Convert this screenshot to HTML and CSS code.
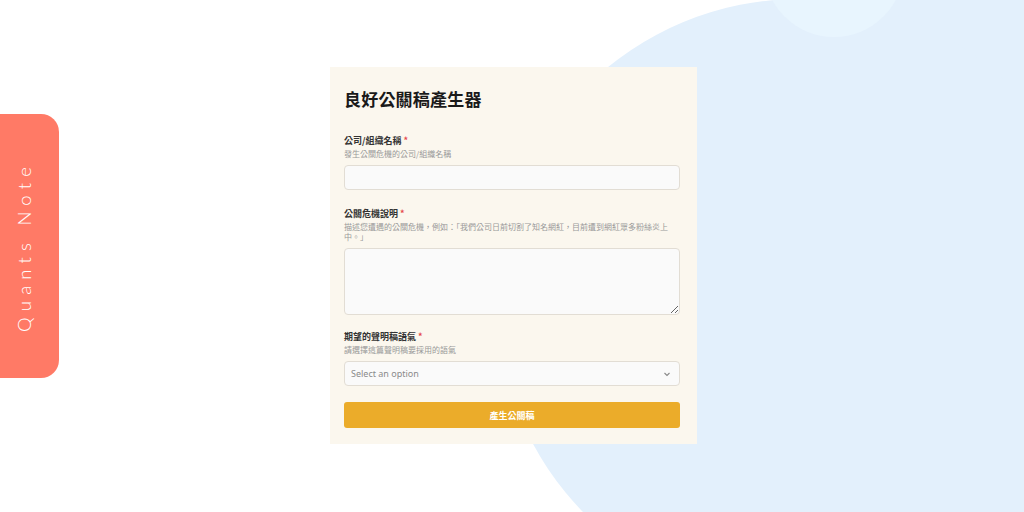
FILE: index.html
```html
<!DOCTYPE html>
<html lang="zh-Hant">
<head>
    <meta charset="UTF-8">
    <meta name="viewport" content="width=device-width, initial-scale=1.0">
    <title>良好公關稿產生器</title>
    <link rel="stylesheet" href="styles.css">
</head>
<body>
    <!-- soft blue backdrop on the right -->
    <svg class="backdrop" width="1024" height="512" viewBox="0 0 1024 512" aria-hidden="true">
        <rect x="799" y="0" width="225" height="512" fill="#e3f0fc"/>
        <circle cx="799" cy="301" r="302" fill="#e3f0fc"/>
        <circle cx="834" cy="-33" r="70" fill="#e8f5fe"/>
    </svg>

    <div class="side-tab">
        <span>Quants Note</span>
    </div>

    <div class="page">
        <form class="card" onsubmit="return false;">
            <h1>良好公關稿產生器</h1>

            <div class="field">
                <label for="company">公司/組織名稱 <span class="req">*</span></label>
                <p class="hint">發生公關危機的公司/組織名稱</p>
                <input type="text" id="company">
            </div>

            <div class="field field-tall">
                <label for="crisis">公關危機說明 <span class="req">*</span></label>
                <p class="hint">描述您遭遇的公關危機，例如：「我們公司日前切割了知名網紅，目前遭到網紅眾多粉絲炎上中。」</p>
                <textarea id="crisis"></textarea>
            </div>

            <div class="field field-last">
                <label for="tone">期望的聲明稿語氣 <span class="req">*</span></label>
                <p class="hint">請選擇這篇聲明稿要採用的語氣</p>
                <div class="select-wrap">
                    <select id="tone">
                        <option value="">Select an option</option>
                        <option value="sincere">誠懇</option>
                        <option value="firm">堅定</option>
                        <option value="humble">謙卑</option>
                    </select>
                    <svg class="chevron" width="8" height="8" viewBox="0 0 8 8">
                        <path d="M1.5 3 L4 5.5 L6.5 3" fill="none" stroke="#888" stroke-width="1.1"/>
                    </svg>
                </div>
            </div>

            <button type="submit">產生公關稿</button>
        </form>
    </div>
</body>
</html>
```

FILE: styles.css
```css
html, body {
    margin: 0;
    padding: 0;
}
body {
    font-family: "Noto Sans CJK TC", "Noto Sans", sans-serif;
    background-color: #ffffff;
    width: 1024px;
    height: 512px;
    overflow: hidden;
    position: relative;
}
.backdrop {
    position: absolute;
    left: 0;
    top: 0;
}
.side-tab {
    position: absolute;
    left: 0;
    top: 114px;
    width: 59px;
    height: 264px;
    background-color: #ff7a66;
    border-radius: 0 18px 18px 0;
    display: flex;
    align-items: center;
    justify-content: center;
    padding-right: 11px;
    box-sizing: border-box;
}
.side-tab span {
    writing-mode: vertical-rl;
    transform: rotate(180deg);
    color: #ffffff;
    font-family: Lato, "Open Sans", sans-serif;
    font-weight: 300;
    font-size: 18.5px;
    letter-spacing: 6.2px;
}
.page {
    position: relative;
    height: 512px;
    display: flex;
    justify-content: center;
    align-items: flex-start;
    padding-top: 67px;
    padding-left: 3px;
    box-sizing: border-box;
}
.card {
    width: 367px;
    box-sizing: border-box;
    background-color: #fbf7ee;
    padding: 20px 17px 16px 14px;
}
h1 {
    margin: 0 0 24px 0;
    font-size: 17px;
    line-height: 24px;
    font-weight: 700;
    color: #1a1a1a;
    letter-spacing: 0.2px;
}
.field {
    margin-bottom: 18px;
}
.field-tall {
    margin-bottom: 16px;
}
.field-last {
    margin-bottom: 16px;
}
label {
    display: block;
    font-size: 9px;
    line-height: 12px;
    font-weight: 700;
    color: #333333;
    margin-bottom: 2px;
}
.req {
    color: #e5484d;
}
.hint {
    margin: 0 0 6px 0;
    font-size: 8px;
    line-height: 10px;
    color: #999999;
}
input, textarea, select {
    display: block;
    width: 100%;
    box-sizing: border-box;
    border: 1px solid #e2ddd4;
    border-radius: 4px;
    background-color: #fafafa;
    font-family: "Noto Sans", "Noto Sans CJK TC", sans-serif;
    font-size: 9px;
    margin: 0;
}
input {
    height: 25px;
}
textarea {
    height: 67px;
    resize: vertical;
}
.select-wrap {
    position: relative;
}
select {
    height: 25px;
    padding: 0 6px;
    color: #8a8a8a;
    appearance: none;
    -webkit-appearance: none;
}
.chevron {
    position: absolute;
    right: 9px;
    top: 9px;
}
button {
    display: block;
    width: 100%;
    height: 26px;
    background-color: #ebac2a;
    color: #ffffff;
    border: none;
    border-radius: 3px;
    font-family: "Noto Sans CJK TC", sans-serif;
    font-size: 9px;
    font-weight: 700;
    cursor: pointer;
}
button:hover {
    background-color: #dd9f20;
}
```
